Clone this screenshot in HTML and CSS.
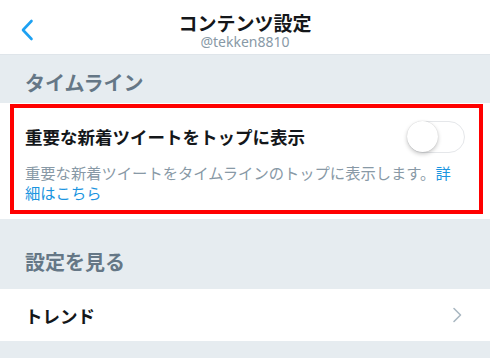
FILE: index.html
```html
<!DOCTYPE html>
<html lang="ja">
<head>
<meta charset="utf-8">
<link rel="stylesheet" href="styles.css">
</head>
<body>
<div class="page">
  <header class="nav">
    <div class="nav-left">
      <svg class="back" width="14" height="22" viewBox="0 0 14 22"><path d="M11.5 2 L3 11 L11.5 20" fill="none" stroke="#1da1f2" stroke-width="2.6" stroke-linecap="round" stroke-linejoin="round"/></svg>
    </div>
    <div class="nav-center">
      <div class="nav-title">コンテンツ設定</div>
      <div class="nav-sub">@tekken8810</div>
    </div>
    <div class="nav-right"></div>
  </header>

  <div class="sec-head first">タイムライン</div>

  <section class="card">
    <div class="highlight">
      <div class="row-top">
        <div class="row-title">重要な新着ツイートをトップに表示</div>
        <div class="switch"><div class="knob"></div></div>
      </div>
      <p class="desc">重要な新着ツイートをタイムラインのトップに表示します。<span class="link">詳細はこちら</span></p>
    </div>
  </section>

  <div class="sec-head second">設定を見る</div>

  <div class="list-row">
    <span class="list-label">トレンド</span>
    <svg class="chev" width="12" height="16" viewBox="0 0 12 16"><path d="M3 1.5 L9.5 8 L3 14.5" fill="none" stroke="#aab8c2" stroke-width="1.6" stroke-linecap="round" stroke-linejoin="round"/></svg>
  </div>

  <div class="bottom"></div>
</div>
</body>
</html>
```
FILE: styles.css
```css
* { box-sizing: border-box; }
html, body { margin: 0; padding: 0; }
body {
  width: 490px;
  height: 358px;
  overflow: hidden;
  background: #e6ecf0;
  font-family: "Noto Sans CJK JP", "Noto Sans", sans-serif;
}
.page { display: flex; flex-direction: column; }

.nav {
  height: 55px;
  background: #fff;
  border-bottom: 1px solid #dfe5ea;
  display: grid;
  grid-template-columns: 1fr auto 1fr;
}
.nav-left { display: flex; align-items: flex-start; padding: 19px 0 0 20px; }
.nav-center { display: flex; flex-direction: column; align-items: center; padding-top: 12px; }
.nav-title {
  font-size: 19px;
  line-height: 22px;
  font-weight: 700;
  color: #14171a;
}
.nav-sub {
  font-family: "Noto Sans", "Noto Sans CJK JP", sans-serif;
  font-size: 14px;
  line-height: 16px;
  color: #8899a6;
}

.sec-head {
  font-size: 20px;
  line-height: 24px;
  font-weight: 700;
  color: #657786;
  padding-left: 25px;
}
.sec-head.first { height: 48px; padding-top: 16px; }
.sec-head.second { height: 70px; padding-top: 31px; }

.card {
  background: #fff;
  height: 116px;
  padding: 1px 7px 5px 10px;
}
.highlight {
  border: 4px solid #ff0000;
  height: 110px;
  padding: 12px 14px 8px 11px;
}
.row-top {
  display: flex;
  align-items: center;
  justify-content: space-between;
  height: 34px;
}
.row-title {
  font-size: 17.5px;
  font-weight: 700;
  color: #14171a;
  line-height: 24px;
}
.switch {
  width: 58px;
  height: 32px;
  border-radius: 16px;
  border: 1.5px solid #e5e7ea;
  background: #fff;
  position: relative;
}
.knob {
  position: absolute;
  left: -1px;
  top: -1px;
  width: 31px;
  height: 31px;
  border-radius: 50%;
  background: #fff;
  box-shadow: 0 2px 4px rgba(0,0,0,0.22), 0 0 1px rgba(0,0,0,0.2);
}
.desc {
  margin: 8px 0 0;
  font-size: 15.3px;
  line-height: 20px;
  color: #8899a6;
}
.link { color: #1b95e0; }

.list-row {
  height: 52px;
  background: #fff;
  display: flex;
  align-items: center;
  justify-content: space-between;
  padding: 0 27px 0 25px;
}
.list-label {
  font-size: 17.5px;
  font-weight: 700;
  color: #14171a;
}
.bottom { height: 17px; }
```
